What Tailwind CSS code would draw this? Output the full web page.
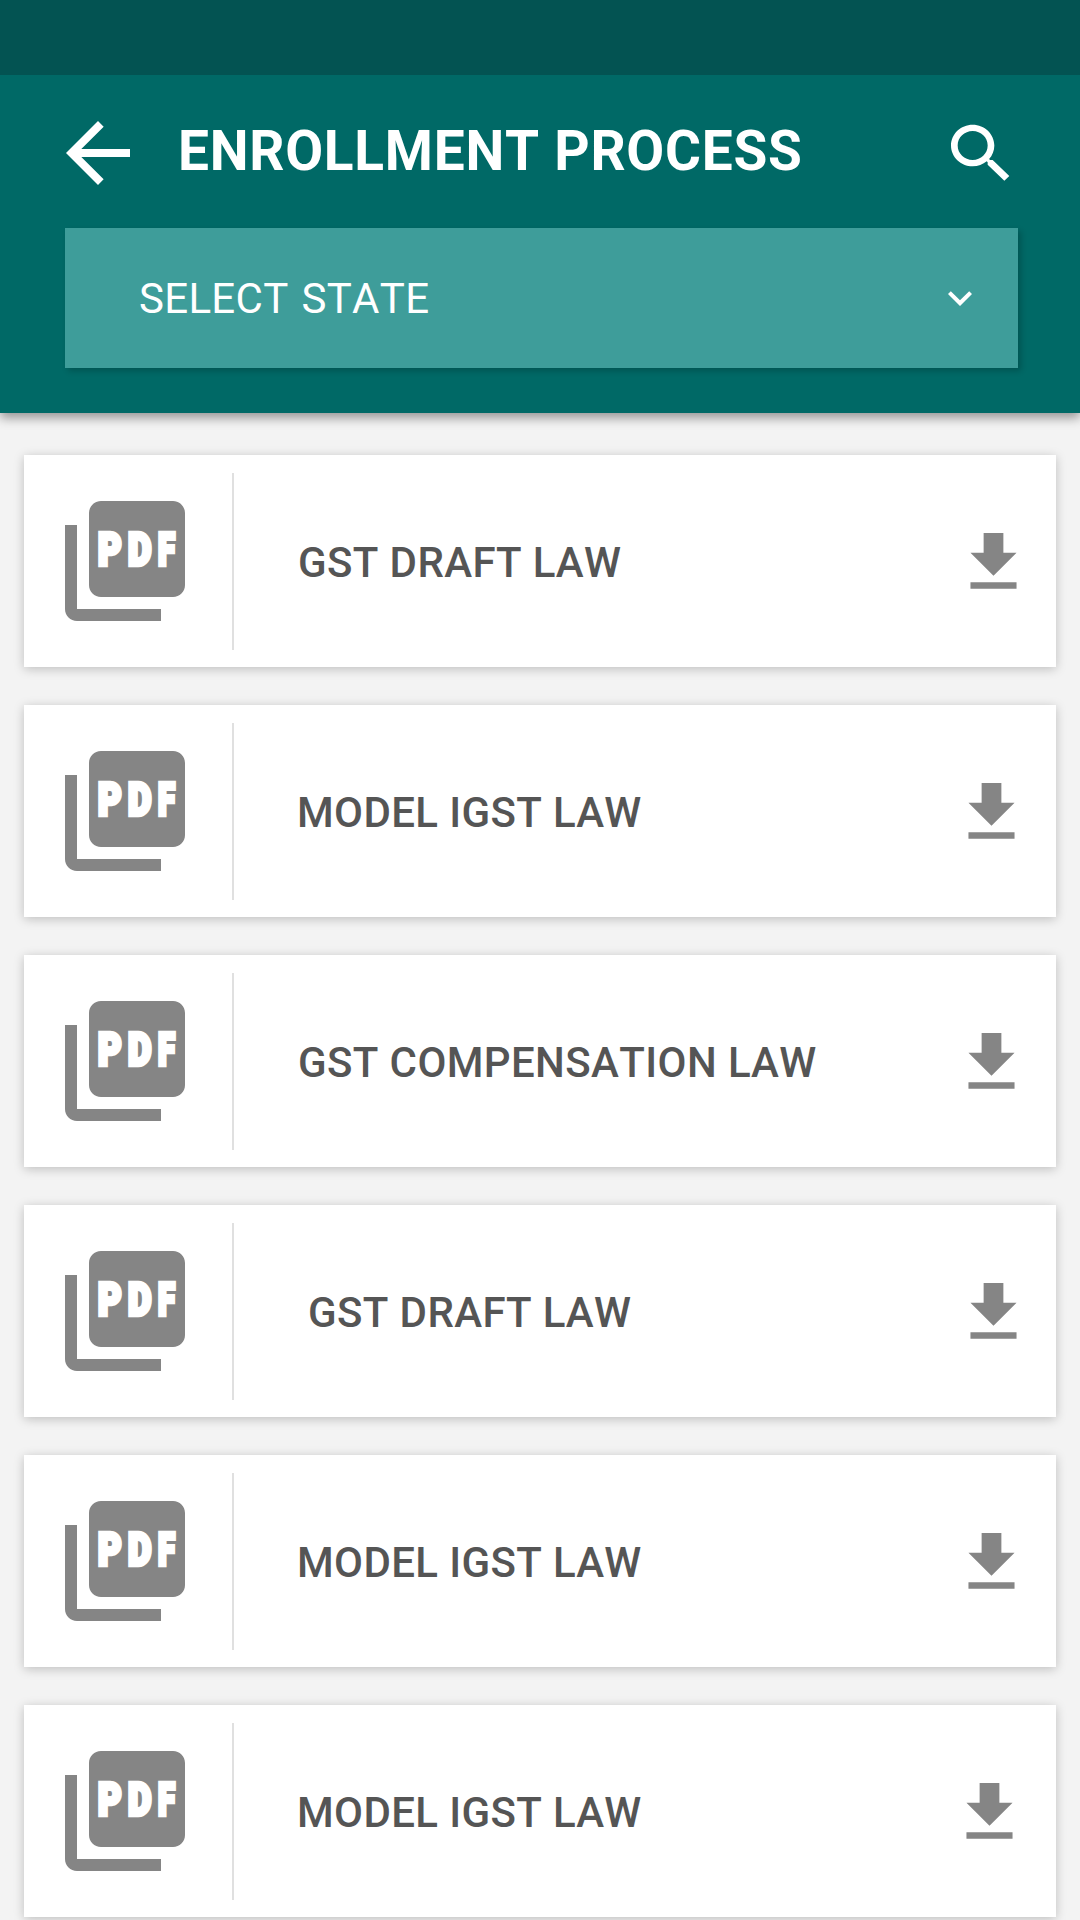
<!DOCTYPE html>
<html lang="en">
<head>
<meta charset="utf-8">
<title>Enrollment Process</title>
<script src="https://cdn.jsdelivr.net/npm/@tailwindcss/browser@4"></script>
</head>
<body class="h-[1920px] w-[1080px] overflow-hidden bg-[#f3f3f3] font-[Roboto,sans-serif] [font-kerning:none]">
<svg class="hidden">
  <symbol id="pdf" viewBox="0 0 24 24">
    <path d="M20 2H8c-1.1 0-2 .9-2 2v12c0 1.1.9 2 2 2h12c1.1 0 2-.9 2-2V4c0-1.1-.9-2-2-2zM4 6H2v14c0 1.1.9 2 2 2h14v-2H4V6z" fill="#858585"/>
    <g fill="#fff" stroke="#fff" stroke-width=".72" font-family="Roboto" font-weight="900" font-size="7.4">
      <text transform="translate(7.5 12.64) scale(.811 1)">P</text>
      <text transform="translate(12.5 12.64) scale(.811 1)">D</text>
      <text transform="translate(17.5 12.64) scale(.698 1)">F</text>
    </g>
  </symbol>
  <symbol id="download" viewBox="0 0 24 24"><path d="M19 9h-4V3H9v6H5l7 7 7-7zM5 18v2h14v-2H5z" fill="#858585"/></symbol>
</svg>
<header class="flex h-[413px] flex-col bg-[#006966] shadow-[0_5px_10px_rgba(0,0,0,0.38)]">
  <div class="h-[75px] shrink-0 bg-[#035352]"></div>
  <div class="flex h-[153px] shrink-0 items-start pl-[50px] pr-[59px]">
    <svg class="mt-[30px] size-24 shrink-0" viewBox="0 0 24 24" fill="#fff"><path d="M20 11H7.83l5.59-5.59L12 4l-8 8 8 8 1.41-1.41L7.83 13H20v-2z"/></svg>
    <h1 class="ml-8 mt-[44px] whitespace-nowrap text-[55px] leading-[64px] font-bold tracking-[0.74px] text-white">ENROLLMENT PROCESS</h1>
    <svg class="ml-auto mt-[40px] h-[77px] w-[80px] shrink-0" viewBox="0 0 24 24" preserveAspectRatio="none" fill="#fff"><path d="M15.5 14h-.79l-.28-.27C15.41 12.59 16 11.11 16 9.5 16 5.91 13.09 3 9.5 3S3 5.91 3 9.5 5.91 16 9.5 16c1.61 0 3.09-.59 4.23-1.57l.27.28v.79l5 4.99L20.49 19l-4.99-5zm-6 0C7.01 14 5 11.99 5 9.5S7.01 5 9.5 5 14 7.01 14 9.5 11.99 14 9.5 14z"/></svg>
  </div>
  <div class="ml-[65px] flex h-[140px] w-[953px] shrink-0 items-center justify-between bg-[#3e9d9a] pl-[74px] pr-[34px] text-[42px] text-white shadow-[3px_3px_6px_rgba(0,0,0,0.2)]">
    <span class="tracking-[0.3px] [word-spacing:2.3px]">SELECT STATE</span>
    <svg class="size-12" viewBox="0 0 24 24" fill="#fff"><path d="M16.59 8.59L12 13.17 7.41 8.59 6 10l6 6 6-6z"/></svg>
  </div>
</header>
<main id="list" class="flex flex-col gap-[38px] px-6 pt-[42px]"></main>
<script>
  const rows = [
    ['GST DRAFT LAW', 'ml-[64px]', 'mr-[23px]'],
    ['MODEL IGST LAW', 'ml-[63px]', 'mr-[25px]'],
    ['GST COMPENSATION LAW', 'ml-[64px]', 'mr-[25px]'],
    ['GST DRAFT LAW', 'ml-[74px]', 'mr-[23px]'],
    ['MODEL IGST LAW', 'ml-[63px]', 'mr-[25px]'],
    ['MODEL IGST LAW', 'ml-[63px]', 'mr-[27px]'],
  ];
  document.getElementById('list').innerHTML = rows.map(([name, left, right]) => `
    <article class="flex h-[212px] shrink-0 items-center bg-white shadow-[0_2px_10px_rgba(0,0,0,0.22)]">
      <svg class="ml-[29px] size-36 shrink-0"><use href="#pdf"/></svg>
      <div class="ml-[35px] h-[177px] w-0.5 shrink-0 bg-[#e0e0e0]"></div>
      <span class="${left} mt-0.5 whitespace-nowrap text-[42px] font-medium tracking-[0.38px] text-[#555]">${name}</span>
      <svg class="${right} ml-auto mt-0.5 size-[79px] shrink-0"><use href="#download"/></svg>
    </article>`).join('');
</script>
</body>
</html>
